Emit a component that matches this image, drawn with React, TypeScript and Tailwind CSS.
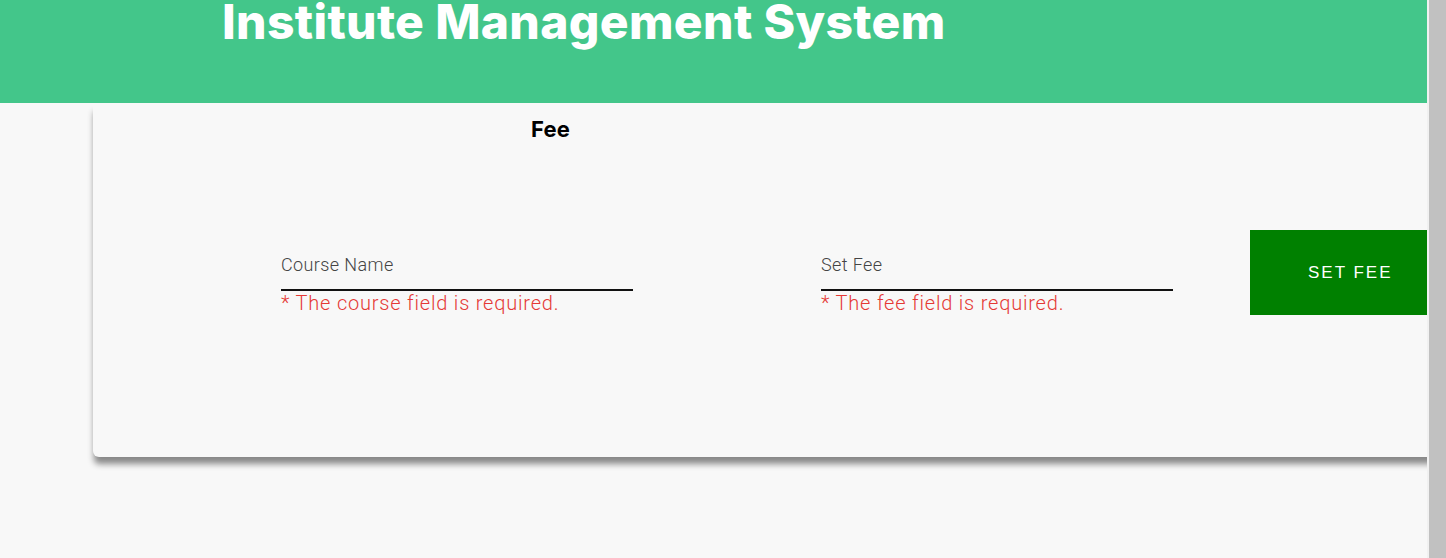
export default function App() {
  return (
    <div className="flex min-h-[558px] w-full bg-[#f8f8f8]" style={{ fontFamily: "Roboto, 'Liberation Sans', sans-serif" }}>
      <div className="flex flex-1 flex-col overflow-hidden">
        {/* Header */}
        <div className="h-[103px] bg-[#43c68a] overflow-hidden">
          <h1
            className="pl-[222px] -mt-[8px] text-[48px] font-extrabold leading-[60px] text-white tracking-[0.35px]"
            style={{ fontFamily: "Inter, 'Liberation Sans', sans-serif" }}
          >
            Institute Management System
          </h1>
        </div>

        {/* Card */}
        <div className="ml-[93px] -mr-[12px] h-[354px] rounded-bl-[6px] bg-[#f8f8f8] shadow-[0_8px_6px_-1px_rgba(0,0,0,0.45)]">
          <div className="pt-[12px] pl-[438px]">
            <h2
              className="text-[22px] font-bold leading-[28px] tracking-[0.2px] text-black"
              style={{ fontFamily: "Inter, 'Liberation Sans', sans-serif" }}
            >
              Fee
            </h2>
          </div>

          <div className="mt-[87px] flex items-start">
            <div className="ml-[188px] mt-[24px] w-[352px]">
              <div className="text-[18px] font-light leading-[22px] tracking-[0.4px] text-[#444]">Course Name</div>
              <div className="mt-[13px] h-[2px] bg-[#111]" />
              <div className="text-[20px] font-light leading-[24px] tracking-[0.8px] text-[#e53935]">
                * The course field is required.
              </div>
            </div>
            <div className="ml-[188px] mt-[24px] w-[352px]">
              <div className="text-[18px] font-light leading-[22px] tracking-[0.4px] text-[#444]">Set Fee</div>
              <div className="mt-[13px] h-[2px] bg-[#111]" />
              <div className="text-[20px] font-light leading-[24px] tracking-[0.8px] text-[#e53935]">
                * The fee field is required.
              </div>
            </div>
            <button
              className="ml-[77px] flex h-[85px] flex-1 items-center justify-start pl-[58px] bg-[#008000] text-[17px] tracking-[2px] text-white"
              style={{ fontFamily: "'Liberation Sans', Arial, sans-serif" }}
            >
              SET FEE
            </button>
          </div>
        </div>
      </div>

      {/* Scrollbar */}
      <div className="w-[19px] border-l-[2px] border-[#f1f1f1] bg-[#c1c1c1]" />
    </div>
  );
}
